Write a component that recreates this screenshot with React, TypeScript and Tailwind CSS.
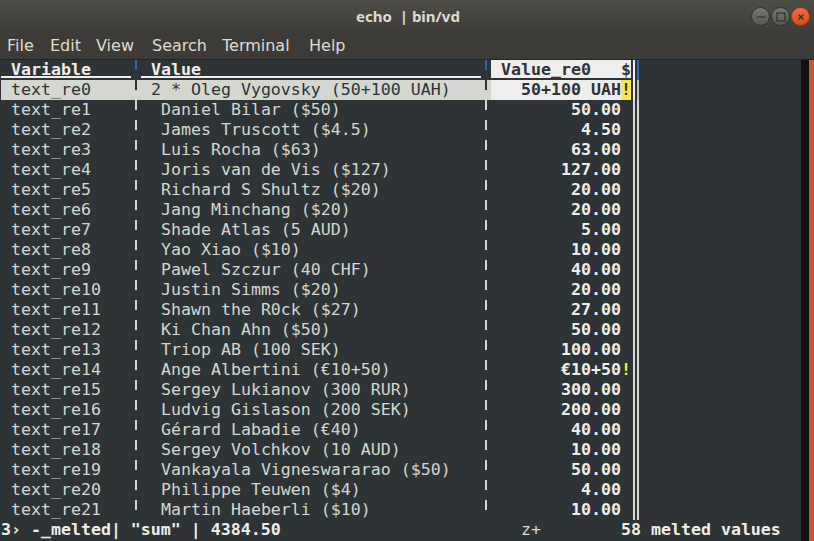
const rows: [string, string, string, boolean?][] = [
  ['text_re0', '2 * Oleg Vygovsky (50+100 UAH)', '50+100 UAH', true],
  ['text_re1', ' Daniel Bilar ($50)', '50.00'],
  ['text_re2', ' James Truscott ($4.5)', '4.50'],
  ['text_re3', ' Luis Rocha ($63)', '63.00'],
  ['text_re4', ' Joris van de Vis ($127)', '127.00'],
  ['text_re5', ' Richard S Shultz ($20)', '20.00'],
  ['text_re6', ' Jang Minchang ($20)', '20.00'],
  ['text_re7', ' Shade Atlas (5 AUD)', '5.00'],
  ['text_re8', ' Yao Xiao ($10)', '10.00'],
  ['text_re9', ' Pawel Szczur (40 CHF)', '40.00'],
  ['text_re10', ' Justin Simms ($20)', '20.00'],
  ['text_re11', ' Shawn the R0ck ($27)', '27.00'],
  ['text_re12', ' Ki Chan Ahn ($50)', '50.00'],
  ['text_re13', ' Triop AB (100 SEK)', '100.00'],
  ['text_re14', ' Ange Albertini (€10+50)', '€10+50', true],
  ['text_re15', ' Sergey Lukianov (300 RUR)', '300.00'],
  ['text_re16', ' Ludvig Gislason (200 SEK)', '200.00'],
  ['text_re17', ' Gérard Labadie (€40)', '40.00'],
  ['text_re18', ' Sergey Volchkov (10 AUD)', '10.00'],
  ['text_re19', ' Vankayala Vigneswararao ($50)', '50.00'],
  ['text_re20', ' Philippe Teuwen ($4)', '4.00'],
  ['text_re21', ' Martin Haeberli ($10)', '10.00'],
]

const menu: [string, string][] = [
  ['File', 'w-[43px]'],
  ['Edit', 'w-[46px]'],
  ['View', 'w-[56px]'],
  ['Search', 'w-[70px]'],
  ['Terminal', 'w-[87px]'],
  ['Help', 'w-[50px]'],
]

function Sep({ color }: { color: string }) {
  return (
    <div className="w-[10px] h-[20px] flex justify-center items-start">
      <div className={`w-[2px] mr-[1px] h-[10px] ${color}`} />
    </div>
  )
}

function DoubleSep({ first, second }: { first: string; second: string }) {
  return (
    <div className="w-[10px] h-[20px] flex pl-[2px] gap-[2px]">
      <div className={`w-[2px] h-[20px] ${first}`} />
      <div className={`w-[2px] h-[20px] ${second}`} />
    </div>
  )
}

function WinButton({ kind }: { kind: 'min' | 'max' | 'close' }) {
  const bg =
    kind === 'close'
      ? 'bg-gradient-to-b from-[#f06a3a] to-[#dc4e1e] border-[#a33c16]'
      : 'bg-gradient-to-b from-[#7a7873] to-[#575652] border-[#35342f]'
  return (
    <div className={`w-[19px] h-[19px] rounded-full border flex items-center justify-center ${bg}`}>
      <svg width="10" height="10" viewBox="0 0 10 10" fill="none" stroke="#34332f" strokeWidth="1.3">
        {kind === 'min' && <path d="M0.5 5h9" />}
        {kind === 'max' && <rect x="1" y="1" width="8" height="8" />}
        {kind === 'close' && <path d="M2.5 2.5l5 5M7.5 2.5l-5 5" />}
      </svg>
    </div>
  )
}

export default function App() {
  return (
    <div className="w-[814px] h-[541px] overflow-hidden bg-[#3c3b37] flex flex-col">
      <div className="h-[33px] shrink-0 flex items-center bg-gradient-to-b from-[#4f4d47] to-[#3d3c38] relative">
        <div className="flex-1 flex justify-center pl-[2px] font-['Noto_Sans',sans-serif] font-bold text-[15px] text-[#dfdbd2] whitespace-pre">
          echo  | bin/vd
        </div>
        <div className="absolute right-[4px] top-[7px] flex gap-px">
          <WinButton kind="min" />
          <WinButton kind="max" />
          <WinButton kind="close" />
        </div>
      </div>
      <div className="h-[26px] shrink-0 flex items-center pl-[7px] pb-[1px] font-['DejaVu_Sans',sans-serif] text-[16px] text-[#dfdbd2]">
        {menu.map(([label, w]) => (
          <span key={label} className={w}>
            {label}
          </span>
        ))}
      </div>
      <div className="h-px bg-[#232320] shrink-0" />
      <div className="flex flex-1">
        <div className="w-[801px] bg-[#2e3436] pl-[1px] font-['DejaVu_Sans_Mono',monospace] text-[16.6px] leading-[20px] text-[#d3d7cf] whitespace-pre">
          {/* header row */}
          <div className="flex h-[20px] font-bold">
            <div className="w-[130px] relative text-[#eeeeec]">
              {' Variable'}
              <div className="absolute left-0 right-0 top-[16px] h-[2px] bg-[#eeeeec]" />
            </div>
            <Sep color="bg-[#3465a4]" />
            <div className="w-[340px] relative text-[#eeeeec]">
              {' Value'}
              <div className="absolute left-0 right-0 top-[16px] h-[2px] bg-[#eeeeec]" />
            </div>
            <Sep color="bg-[#3465a4]" />
            <div className="w-[140px] relative bg-[#eeeeec] text-[#2e3436] flex justify-between">
              <span>{' Value_re0'}</span>
              <span>$</span>
              <div className="absolute left-0 right-0 top-[18px] h-[2px] bg-[#2e3436]" />
            </div>
            <DoubleSep first="bg-[#eeeeec]" second="bg-[#3465a4]" />
          </div>
          {rows.map(([name, value, amount, bang], i) => {
            const sel = i === 0
            return (
              <div key={name} className="flex h-[20px]">
                <div className={`flex ${sel ? 'bg-[#d3d7cf] text-[#2e3436]' : ''}`}>
                  <div className="w-[130px]">{' ' + name}</div>
                  <Sep color={sel ? 'bg-[#2e3436]' : 'bg-[#d3d7cf]'} />
                  <div className="w-[340px]">{' ' + value}</div>
                  <Sep color={sel ? 'bg-[#2e3436]' : 'bg-[#d3d7cf]'} />
                </div>
                <div
                  className={`w-[140px] flex justify-end font-bold ${
                    sel ? 'bg-[#eeeeec] text-[#2e3436]' : 'text-[#eeeeec]'
                  }`}
                >
                  <span>{amount}</span>
                  <span
                    className={`w-[10px] ${
                      bang ? (sel ? 'bg-[#fce94f] text-[#2e3436]' : 'text-[#fce94f]') : ''
                    }`}
                  >
                    {bang ? '!' : ' '}
                  </span>
                </div>
                <DoubleSep
                  first={sel ? 'bg-[#eeeeec]' : 'bg-[#d3d7cf]'}
                  second={sel ? 'bg-[#babdb6]' : 'bg-[#d3d7cf]'}
                />
              </div>
            )
          })}
          {/* status line */}
          <div className="flex h-[20px]">
            <span className="w-[520px] font-bold text-[#eeeeec]">{'3› -_melted| "sum" | 4384.50'}</span>
            <span className="w-[100px]">z+</span>
            <span className="font-bold text-[#eeeeec]">58 melted values</span>
          </div>
        </div>
        <div className="w-[8px] bg-[#111111]" />
        <div className="flex-1 bg-[#c75a2e]" />
      </div>
    </div>
  )
}
